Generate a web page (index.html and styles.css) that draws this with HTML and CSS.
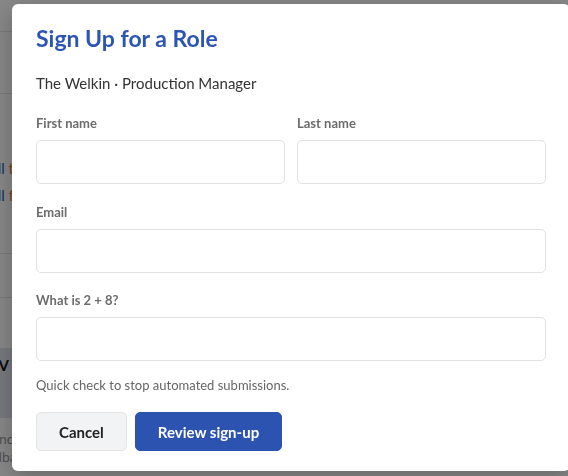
FILE: index.html
```html
<!DOCTYPE html>
<html lang="en">
<head>
    <meta charset="UTF-8">
    <meta name="viewport" content="width=device-width, initial-scale=1.0">
    <title>Sign Up for a Role</title>
    <link rel="stylesheet" href="styles.css">
</head>
<body>
    <div class="page">
        <div class="row row-top"></div>
        <div class="row row-head"></div>
        <div class="row row-list">
            <p class="frag"><span class="blue">Show all</span>&nbsp;<span class="orange">t</span></p>
            <p class="frag"><span class="blue">Fill</span>&nbsp;<span class="orange">f</span></p>
        </div>
        <div class="row row-gap"></div>
        <div class="row row-empty"></div>
        <div class="card">
            <p class="card-title">The V</p>
            <p class="card-line">Octo</p>
            <p class="card-line">with</p>
        </div>
        <div class="foot">
            <p>Calendar</p>
            <p>Feedback</p>
        </div>
    </div>

    <div class="overlay"></div>

    <div class="modal">
        <h2 class="modal-title">Sign Up for a Role</h2>
        <p class="modal-sub">The Welkin · Production Manager</p>

        <form class="form">
            <div class="field-row">
                <div class="field">
                    <label for="firstName">First name</label>
                    <input type="text" id="firstName">
                </div>
                <div class="field">
                    <label for="lastName">Last name</label>
                    <input type="text" id="lastName">
                </div>
            </div>
            <div class="field">
                <label for="email">Email</label>
                <input type="email" id="email">
            </div>
            <div class="field">
                <label for="check">What is 2 + 8?</label>
                <input type="text" id="check">
            </div>
            <p class="hint">Quick check to stop automated submissions.</p>

            <div class="actions">
                <button type="button" class="btn btn-cancel">Cancel</button>
                <button type="button" class="btn btn-primary">Review sign-up</button>
            </div>
        </form>
    </div>
</body>
</html>
```

FILE: styles.css
```css
* {
    box-sizing: border-box;
}
body {
    margin: 0;
    font-family: Lato, "Noto Sans", sans-serif;
    background: #fff;
    color: #333;
    overflow: hidden;
    height: 476px;
}
.page {
    width: 568px;
}
.row {
    border-bottom: 1px solid #e4e4e4;
}
.row-top {
    height: 32px;
}
.row-head {
    height: 62px;
}
.row-list {
    height: 160px;
    padding-top: 66px;
}
.row-gap {
    height: 44px;
}
.row-empty {
    height: 50px;
    border-bottom: none;
}
.frag {
    width: 14px;
    display: flex;
    justify-content: flex-end;
    margin: 0 0 10px;
    font-size: 15px;
    line-height: 17px;
    white-space: nowrap;
}
.blue {
    color: #2d56b3;
}
.orange {
    color: #d9822b;
}
.card {
    height: 70px;
    background: #dfe4ec;
    padding-top: 8px;
    margin-left: -30px;
}
.card p {
    margin: 0;
    white-space: nowrap;
}
.card-title {
    font-weight: 700;
    font-size: 15px;
    line-height: 18px;
    color: #111;
}
.card-line {
    font-size: 12px;
    line-height: 13px;
    color: #444;
}
.foot {
    padding-top: 12px;
    margin-left: -28px;
}
.foot p {
    margin: 0;
    font-size: 14px;
    line-height: 18px;
    color: #999;
}
.overlay {
    position: fixed;
    inset: 0;
    background: rgba(0, 0, 0, 0.47);
}
.modal {
    position: fixed;
    top: 4px;
    left: 12px;
    width: 558px;
    height: 467px;
    background: #fff;
    border-radius: 6px;
    padding: 20px 24px;
    box-shadow: 0 6px 24px rgba(0, 0, 0, 0.25);
}
.modal-title {
    margin: 0;
    font-size: 23px;
    line-height: 28px;
    font-weight: 700;
    color: #2d56b3;
}
.modal-sub {
    margin: 21px 0 0;
    font-size: 15px;
    line-height: 20px;
    color: #333;
}
.form {
    margin-top: 21px;
    display: flex;
    flex-direction: column;
    gap: 18px;
}
.field-row {
    display: grid;
    grid-template-columns: 1fr 1fr;
    gap: 12px;
    margin-bottom: 1px;
}
.field {
    display: flex;
    flex-direction: column;
}
.field label {
    font-size: 13px;
    line-height: 18px;
    font-weight: 700;
    color: #6c6c6c;
    margin-bottom: 8px;
}
.field input {
    height: 44px;
    border: 1px solid #e2e2e2;
    border-radius: 5px;
    padding: 0 12px;
    font-family: inherit;
    font-size: 15px;
    outline: none;
}
.hint {
    margin: -3px 0 0;
    font-size: 13px;
    line-height: 18px;
    color: #666;
}
.actions {
    display: flex;
    gap: 8px;
}
.btn {
    height: 39px;
    border-radius: 5px;
    font-family: inherit;
    font-size: 15px;
    font-weight: 700;
    padding: 0 22px;
    cursor: pointer;
}
.btn-cancel {
    background: #f2f3f5;
    border: 1px solid #e3e3e3;
    color: #222;
}
.btn-primary {
    background: #2c53b0;
    border: 1px solid #2c53b0;
    color: #fff;
}
```
